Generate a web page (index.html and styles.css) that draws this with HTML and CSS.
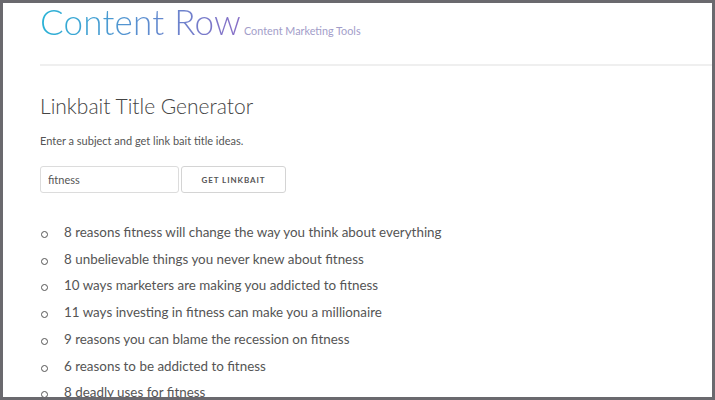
FILE: index.html
```html
<!DOCTYPE html>
<html lang="en">
<head>
<meta charset="utf-8">
<title>Content Row - Linkbait Title Generator</title>
<link rel="stylesheet" href="styles.css">
</head>
<body>
<div class="frame">
  <header class="site-header">
    <div class="brand">
      <span class="logo">Content Row</span>
      <span class="tagline">Content Marketing Tools</span>
    </div>
  </header>
  <main class="content">
    <h1 class="page-title">Linkbait Title Generator</h1>
    <p class="intro">Enter a subject and get link bait title ideas.</p>
    <form class="gen-form">
      <input class="subject" type="text" value="fitness">
      <button class="btn" type="button">GET LINKBAIT</button>
    </form>
    <ul class="results">
      <li>8 reasons fitness will change the way you think about everything</li>
      <li>8 unbelievable things you never knew about fitness</li>
      <li>10 ways marketers are making you addicted to fitness</li>
      <li>11 ways investing in fitness can make you a millionaire</li>
      <li>9 reasons you can blame the recession on fitness</li>
      <li>6 reasons to be addicted to fitness</li>
      <li>8 deadly uses for fitness</li>
    </ul>
  </main>
</div>
</body>
</html>
```
FILE: styles.css
```css
* { box-sizing: border-box; }
html, body { margin: 0; padding: 0; background: #fff; }
body { font-family: "Lato", "Open Sans", sans-serif; color: #555; }
.frame {
  width: 715px;
  height: 400px;
  border: 3px solid #6a696e;
  overflow: hidden;
  background: #fff;
}
.site-header {
  margin-left: 37px;
  border-bottom: 2px solid #efefef;
  height: 63px;
}
.brand {
  display: flex;
  align-items: baseline;
  gap: 3px;
}
.logo {
  font-size: 35px;
  font-weight: 300;
  line-height: 36px;
  letter-spacing: 0.2px;
  background: linear-gradient(100deg, #27b4d6 0%, #5a8fd0 50%, #8a6dc6 100%);
  -webkit-background-clip: text;
  background-clip: text;
  color: transparent;
}
.tagline {
  font-size: 10.8px;
  color: #a29dc9;
}
.content { padding-left: 37px; }
.page-title {
  margin: 25px 0 0;
  font-size: 21px;
  font-weight: 300;
  color: #444;
  line-height: 30px;
}
.intro {
  margin: 13px 0 0;
  font-size: 11px;
  color: #555;
}
.gen-form {
  display: flex;
  gap: 2px;
  margin-top: 19px;
}
.subject {
  width: 139px;
  height: 27px;
  border: 1px solid #dcdcdc;
  border-radius: 3px;
  padding: 0 7px;
  font-family: inherit;
  font-size: 11px;
  color: #555;
}
.btn {
  width: 105px;
  height: 27px;
  border: 1px solid #d4d4d4;
  border-radius: 3px;
  background: #fff;
  font-family: inherit;
  font-size: 8px;
  font-weight: 700;
  letter-spacing: 0.9px;
  color: #555;
}
.results {
  margin: 26px 0 0;
  padding: 0;
  list-style: none;
  font-size: 13.4px;
  color: #555;
}
.results li {
  line-height: 26.7px;
  padding-left: 24px;
  position: relative;
}
.results li::before {
  content: "";
  position: absolute;
  left: 1px;
  top: 12px;
  width: 5px;
  height: 5px;
  border: 1px solid #555;
  border-radius: 50%;
}
```
